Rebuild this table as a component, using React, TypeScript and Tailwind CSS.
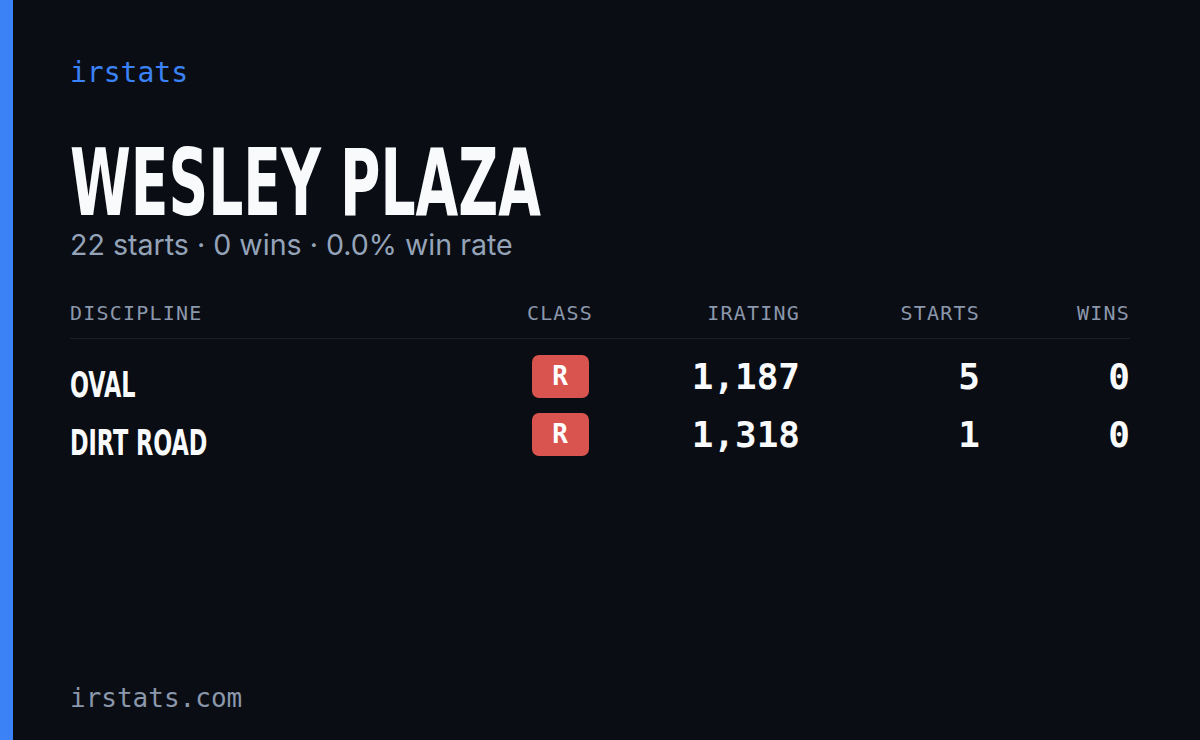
const ROWS = [
  { name: "OVAL", cls: "R", irating: "1,187", starts: "5", wins: "0" },
  { name: "DIRT ROAD", cls: "R", irating: "1,318", starts: "1", wins: "0" },
];

const mono = "font-['DejaVu_Sans_Mono','Liberation_Mono',monospace]";
const cond = "font-['DejaVu_Sans_Condensed','DejaVu_Sans',sans-serif] [font-stretch:condensed]";
const cols = "grid grid-cols-[1fr_100px_190px_180px_150px]";

export default function App() {
  return (
    <div className="flex h-[740px] w-[1200px] bg-[#0a0d14]">
      <div className="w-[13px] shrink-0 bg-[#3b82f6]" />
      <div className="flex flex-1 flex-col pb-[26px] pl-[57px] pr-[70px] pt-[56px]">
        <div className={`${mono} text-[28px] leading-[34px] text-[#3b82f6]`}>irstats</div>

        {/* player name, condensed display face */}
        <h1
          className={`${cond} mt-[58px] origin-left scale-x-[0.666] whitespace-nowrap text-[92px] font-bold leading-[72px] text-[#f8fafc]`}
        >
          WESLEY PLAZA
        </h1>
        <div className="mt-[8px] font-['Inter',sans-serif] text-[28.6px] leading-[34px] text-[#94a3b8]">
          22 starts · 0 wins · 0.0% win rate
        </div>

        <div className="mt-[38px]">
          <div
            className={`${mono} ${cols} border-b border-[#1b1f2a] pb-[12px] text-[20px] leading-[26px] tracking-[0.06em] text-[#8b97ab]`}
          >
            <div>DISCIPLINE</div>
            <div className="text-center">CLASS</div>
            <div className="text-right">IRATING</div>
            <div className="text-right">STARTS</div>
            <div className="text-right">WINS</div>
          </div>

          <div className="flex flex-col gap-[15px] pt-[16px]">
            {ROWS.map((r) => (
              <div key={r.name} className={`${cols} h-[43px] items-center`}>
                <div
                  className={`${cond} origin-left translate-y-[8px] scale-x-[0.69] whitespace-nowrap text-[36px] font-bold leading-[36px] text-[#f8fafc]`}
                >
                  {r.name}
                </div>
                <div className="flex justify-center">
                  <span
                    className={`${mono} flex h-[43px] w-[57px] items-center justify-center rounded-[7px] bg-[#d9534f] text-[26px] font-bold text-white`}
                  >
                    {r.cls}
                  </span>
                </div>
                <div className={`${mono} text-right text-[36px] font-bold leading-[36px] text-[#f8fafc]`}>
                  {r.irating}
                </div>
                <div className={`${mono} text-right text-[36px] font-bold leading-[36px] text-[#f8fafc]`}>
                  {r.starts}
                </div>
                <div className={`${mono} text-right text-[36px] font-bold leading-[36px] text-[#f8fafc]`}>
                  {r.wins}
                </div>
              </div>
            ))}
          </div>
        </div>

        <div className={`${mono} mt-auto text-[26px] leading-[32px] text-[#8b97ab]`}>irstats.com</div>
      </div>
    </div>
  );
}
